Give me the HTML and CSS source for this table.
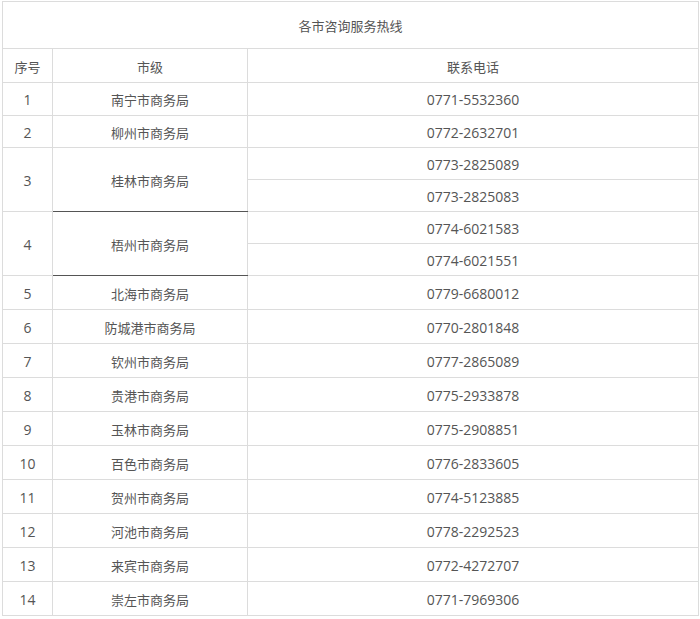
FILE: index.html
```html
<!DOCTYPE html>
<html lang="zh">
<head>
<meta charset="utf-8">
<title>各市咨询服务热线</title>
<link rel="stylesheet" href="styles.css">
</head>
<body>
<table class="hotline">
  <colgroup>
    <col class="c-no">
    <col class="c-city">
    <col class="c-tel">
  </colgroup>
  <tr class="r-title"><td colspan="3" class="zh">各市咨询服务热线</td></tr>
  <tr class="r-head"><td class="zh">序号</td><td class="zh">市级</td><td class="zh">联系电话</td></tr>
  <tr class="r-33"><td>1</td><td class="zh">南宁市商务局</td><td>0771-5532360</td></tr>
  <tr class="r-32"><td>2</td><td class="zh">柳州市商务局</td><td>0772-2632701</td></tr>
  <tr class="r-32"><td rowspan="2">3</td><td rowspan="2" class="zh dark-b">桂林市商务局</td><td>0773-2825089</td></tr>
  <tr class="r-32"><td>0773-2825083</td></tr>
  <tr class="r-32"><td rowspan="2">4</td><td rowspan="2" class="zh dark-b">梧州市商务局</td><td>0774-6021583</td></tr>
  <tr class="r-32"><td>0774-6021551</td></tr>
  <tr class="r-34"><td>5</td><td class="zh">北海市商务局</td><td>0779-6680012</td></tr>
  <tr class="r-34"><td>6</td><td class="zh">防城港市商务局</td><td>0770-2801848</td></tr>
  <tr class="r-34"><td>7</td><td class="zh">钦州市商务局</td><td>0777-2865089</td></tr>
  <tr class="r-34"><td>8</td><td class="zh">贵港市商务局</td><td>0775-2933878</td></tr>
  <tr class="r-34"><td>9</td><td class="zh">玉林市商务局</td><td>0775-2908851</td></tr>
  <tr class="r-34"><td>10</td><td class="zh">百色市商务局</td><td>0776-2833605</td></tr>
  <tr class="r-34"><td>11</td><td class="zh">贺州市商务局</td><td>0774-5123885</td></tr>
  <tr class="r-34"><td>12</td><td class="zh">河池市商务局</td><td>0778-2292523</td></tr>
  <tr class="r-34"><td>13</td><td class="zh">来宾市商务局</td><td>0772-4272707</td></tr>
  <tr class="r-34"><td>14</td><td class="zh">崇左市商务局</td><td>0771-7969306</td></tr>
</table>
</body>
</html>
```

FILE: styles.css
```css
html, body {
  margin: 0;
  padding: 0;
  background: #ffffff;
}

body {
  padding: 1px 2px 0 2px;
  font-family: "Open Sans", "Noto Sans CJK SC", sans-serif;
  font-size: 14px;
  color: #555555;
}

.hotline {
  border-collapse: collapse;
  width: 696px;
  table-layout: fixed;
}

.c-no { width: 50px; }
.c-city { width: 195px; }
.c-tel { width: 451px; }

.hotline td {
  border: 1px solid #dcdcdc;
  text-align: center;
  vertical-align: middle;
  padding: 2px 0 0 0;
  line-height: 18px;
}

.hotline td.zh {
  font-family: "Noto Sans CJK SC", sans-serif;
  font-size: 13px;
}

.r-title td { height: 44px; }
.r-head td { height: 31px; }
.r-33 td { height: 30px; }
.r-32 td { height: 29px; }
.r-34 td { height: 31px; }

.hotline td.dark-b {
  border-bottom: 1px solid #555555;
}
```
